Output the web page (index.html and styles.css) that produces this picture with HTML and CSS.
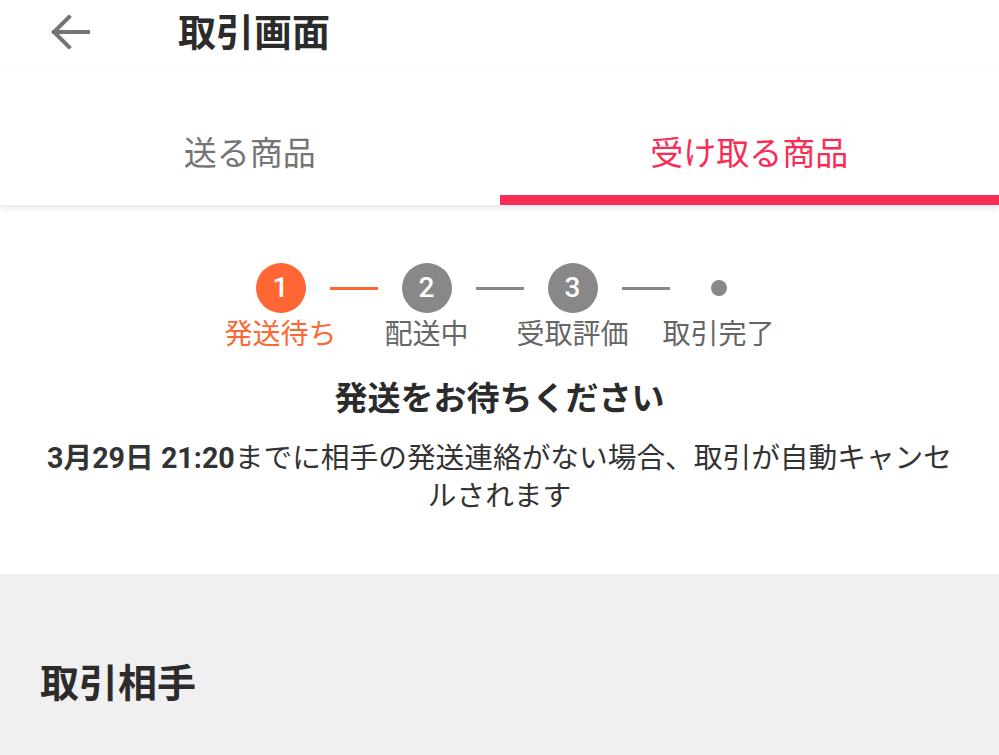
FILE: index.html
```html
<!DOCTYPE html>
<html lang="ja">
<head>
<meta charset="utf-8">
<link rel="stylesheet" href="styles.css">
</head>
<body>
<header class="topbar">
  <svg class="back" width="40" height="34" viewBox="0 0 40 34">
    <path d="M38 17H4 M19 2L4 17L19 32" fill="none" stroke="#757575" stroke-width="4" stroke-linecap="square"/>
  </svg>
  <h1 class="title">取引画面</h1>
</header>
<nav class="tabs">
  <div class="tab">送る商品</div>
  <div class="tab active">受け取る商品</div>
</nav>
<section class="status">
  <div class="steps">
    <div class="step done"><span class="num">1</span><span class="label">発送待ち</span></div>
    <div class="line done"></div>
    <div class="step"><span class="num">2</span><span class="label">配送中</span></div>
    <div class="line"></div>
    <div class="step"><span class="num">3</span><span class="label">受取評価</span></div>
    <div class="line"></div>
    <div class="step last"><span class="dot"></span><span class="label">取引完了</span></div>
  </div>
  <h2 class="status-title">発送をお待ちください</h2>
  <p class="status-text"><b>3月29日 21:20</b>までに相手の発送連絡がない場合、取引が自動キャンセルされます</p>
</section>
<section class="partner">
  <h3 class="partner-title">取引相手</h3>
</section>
</body>
</html>
```
FILE: styles.css
```css
* { box-sizing: border-box; }
html, body { margin: 0; padding: 0; }
body {
  width: 999px;
  height: 755px;
  overflow: hidden;
  background: #fff;
  font-family: Roboto, "Noto Sans CJK JP", sans-serif;
  color: #333;
}
.topbar {
  height: 66px;
  display: flex;
  align-items: center;
  padding-left: 50px;
}
.back { display: block; margin-top: -2px; }
.title {
  margin: 0 0 0 88px;
  font-size: 38px;
  font-weight: 700;
  line-height: 44px;
  color: #2b2b2b;
}
.tabs {
  display: flex;
  position: relative;
  z-index: 1;
  box-shadow: 0 3px 6px rgba(0,0,0,0.10);
  background: #fff;
}
.tab {
  flex: 1;
  text-align: center;
  font-size: 33px;
  line-height: 40px;
  padding-top: 68px;
  padding-bottom: 21px;
  border-bottom: 10px solid transparent;
  color: #757575;
}
.tab.active {
  color: #f92c55;
  border-bottom-color: #f92c55;
}
.status {
  height: 369px;
  padding-top: 58px;
  text-align: center;
}
.steps {
  display: flex;
  justify-content: center;
  align-items: flex-start;
}
.step {
  width: 50px;
  display: flex;
  flex-direction: column;
  align-items: center;
}
.num {
  width: 50px;
  height: 50px;
  border-radius: 50%;
  background: #888;
  color: #fff;
  font-family: Roboto, sans-serif;
  font-weight: 500;
  font-size: 28px;
  line-height: 50px;
  text-align: center;
}
.step.done .num { background: #fe6633; }
.dot {
  width: 16px;
  height: 16px;
  margin: 17px 0;
  border-radius: 50%;
  background: #888;
}
.label {
  margin-top: 4px;
  white-space: nowrap;
  font-size: 28px;
  line-height: 36px;
  color: #666;
}
.step.done .label { color: #fe6633; }
.line {
  width: 48px;
  height: 3px;
  margin: 24px 24px 0;
  background: #888;
}
.line.done { background: #fe6633; }
.status-title {
  margin: 24px 0 0;
  font-size: 33px;
  line-height: 44px;
  font-weight: 700;
  color: #2b2b2b;
}
.status-text {
  margin: 18px 0 0;
  padding: 0 40px;
  font-size: 28.7px;
  line-height: 38px;
  color: #333;
}
.status-text b { font-weight: 700; }
.partner {
  height: 181px;
  background: #f0f0f0;
  padding: 88px 0 0 40px;
}
.partner-title {
  margin: 0;
  font-size: 39px;
  line-height: 44px;
  font-weight: 700;
  color: #2b2b2b;
}
```
